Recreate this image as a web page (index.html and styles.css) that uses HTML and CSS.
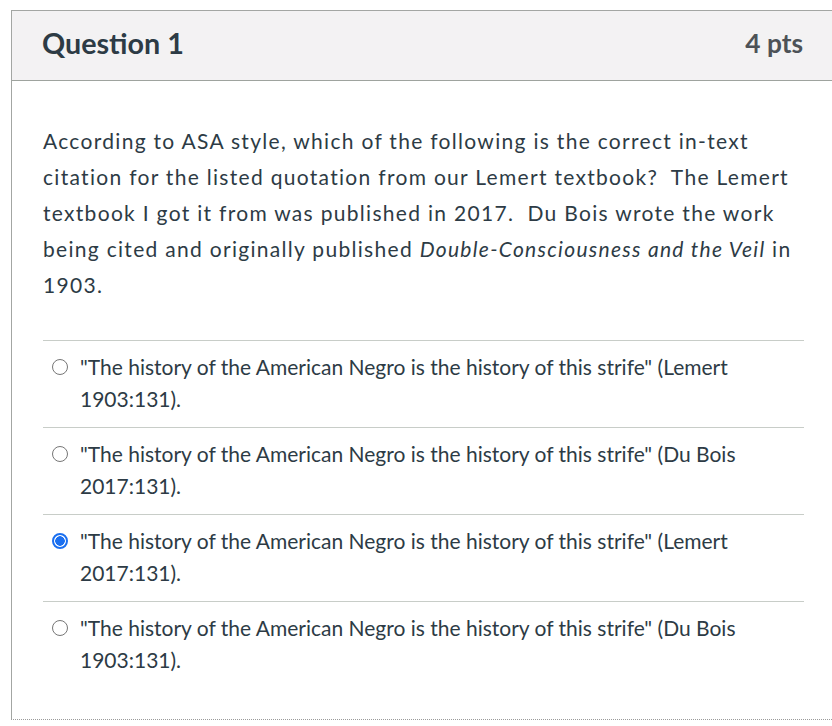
FILE: index.html
```html
<!DOCTYPE html>
<html lang="en">
<head>
<meta charset="utf-8">
<title>Question 1</title>
<link rel="stylesheet" href="styles.css">
</head>
<body>
<div class="card">
  <div class="card-header">
    <h2 class="title">Question 1</h2>
    <span class="pts">4 pts</span>
  </div>
  <div class="card-body">
    <p class="question">According to ASA style, which of the following is the correct in-text citation for the listed quotation from our Lemert textbook?&nbsp; The Lemert textbook I got it from was published in 2017.&nbsp; Du Bois wrote the work being cited and originally published <em>Double-Consciousness and the Veil</em> in 1903.</p>
    <div class="answers">
      <div class="answer">
        <span class="radio"></span>
        <span class="answer-text">"The history of the American Negro is the history of this strife" (Lemert 1903:131).</span>
      </div>
      <div class="answer">
        <span class="radio"></span>
        <span class="answer-text">"The history of the American Negro is the history of this strife" (Du Bois 2017:131).</span>
      </div>
      <div class="answer">
        <span class="radio checked"></span>
        <span class="answer-text">"The history of the American Negro is the history of this strife" (Lemert 2017:131).</span>
      </div>
      <div class="answer">
        <span class="radio"></span>
        <span class="answer-text">"The history of the American Negro is the history of this strife" (Du Bois 1903:131).</span>
      </div>
    </div>
  </div>
</div>
</body>
</html>
```

FILE: styles.css
```css
html, body {
  margin: 0;
  padding: 0;
  background: #ffffff;
}

body {
  font-family: Lato, "Open Sans", "Liberation Sans", sans-serif;
  color: #2d3b45;
  overflow: hidden;
}

.card {
  box-sizing: border-box;
  margin: 10px 0 0 11px;
  width: calc(100% - 11px);
  border-left: 1px solid #a3a6a3;
  border-top: 1px solid #a3a6a3;
  border-bottom: 1px dotted #9a9a9a;
}

.card-header {
  display: flex;
  align-items: center;
  justify-content: space-between;
  height: 63px;
  padding: 0 29px 6px 30px;
  background: #f3f2f3;
  border-bottom: 1px solid #9ea39e;
}

.title {
  margin: 0;
  font-size: 28.7px;
  font-weight: 700;
  color: #2d3b45;
}

.pts {
  font-size: 26.3px;
  font-weight: 700;
  color: #4d5257;
}

.card-body {
  padding: 42px 28px 31px 31px;
}

.question {
  margin: 0 0 37px 0;
  font-size: 21px;
  line-height: 36px;
  letter-spacing: 1.3px;
}

.answer {
  display: flex;
  align-items: flex-start;
  border-top: 1px solid #c8cdc8;
  padding: 10px 0 12px 9px;
}

.radio {
  flex: none;
  box-sizing: border-box;
  width: 16px;
  height: 16px;
  margin-top: 8px;
  margin-right: 12px;
  border: 1.5px solid #767676;
  border-radius: 50%;
  background: #ffffff;
}

.radio.checked {
  border: 2px solid #1a6ff0;
  background: radial-gradient(circle, #1a6ff0 0 4.5px, #ffffff 5px);
}

.answer-text {
  font-size: 21px;
  line-height: 32px;
}
```
